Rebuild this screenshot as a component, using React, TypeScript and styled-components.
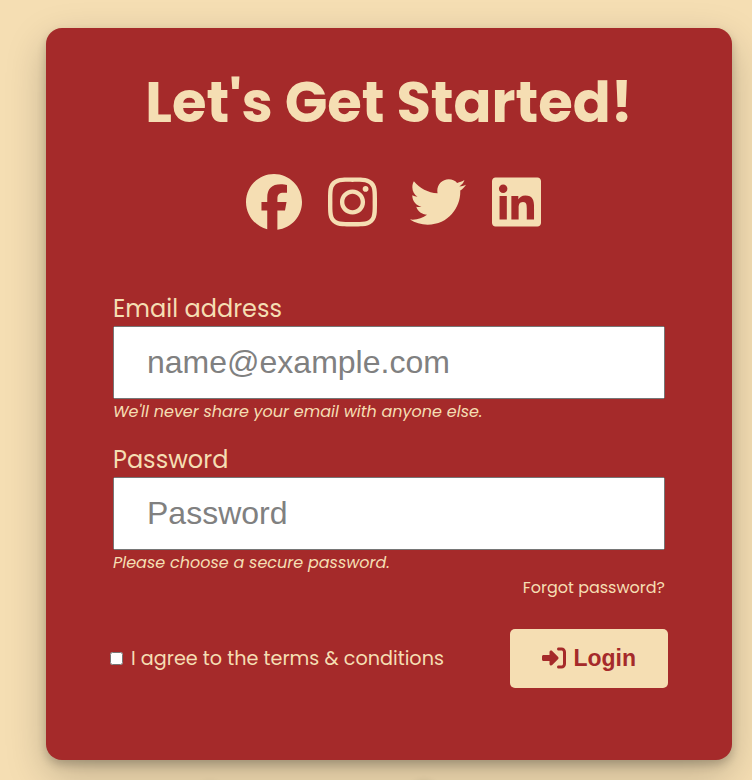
import React from 'react';
import styled, { createGlobalStyle } from 'styled-components';
import { FaFacebook, FaInstagram, FaTwitter, FaLinkedin, FaRightToBracket } from 'react-icons/fa6';

const Global = createGlobalStyle`
  * { box-sizing: border-box; }
  html { background: wheat; }
  body { margin: 0; height: 780px; overflow: hidden; color: wheat; font-family: Poppins, "Open Sans", sans-serif; }
`;
const Card = styled.main`
  width: 686px; height: 732px; margin: 28px 0 0 46px; padding: 36px 67px 0;
  background: brown; border-radius: 16px;
  box-shadow: 0 5px 10px rgba(0,0,0,.2), 0 15px 40px rgba(0,0,0,.22);
  display: flex; flex-direction: column;
`;
const Title = styled.h1`
  margin: 0; height: 76px; font-size: 56px; line-height: 78px; font-weight: 700;
  text-align: center; white-space: nowrap;
`;
const Socials = styled.nav`
  display: flex; gap: 26px; margin: 34px 0 0 133px; height: 56px;
  svg { height: 56px; width: 56px; flex: none; }
`;
const Form = styled.form`display: flex; flex-direction: column; width: 552px; margin-top: 60px;`;
const Field = styled.div<{ $height: number }>`height: ${p => p.$height}px;`;
const Label = styled.label`display: block; height: 36px; line-height: 38px; font-size: 24px; white-space: nowrap;`;
const Input = styled.input`
  display: block; width: 552px; height: 73px; padding: 0 32px; font: 32px "Liberation Sans", sans-serif;
  &::placeholder { color: gray; }
`;
const Hint = styled.em`display: block; height: 24px; font-size: 16px; line-height: 26px; white-space: nowrap;`;
const Forgot = styled.a`align-self: flex-end; font-size: 16px; line-height: 24px; color: wheat;`;
const Actions = styled.div`display: flex; justify-content: space-between; align-items: center; margin: 29px -3px 0;`;
const Terms = styled.label`display: flex; align-items: center; font-size: 19.2px; white-space: nowrap; input { margin: 0 8px 0 0; }`;
const Button = styled.button`
  width: 158px; height: 59px; padding: 0; border: 0; border-radius: 5px; background: wheat; color: brown;
  font: bold 23px "Liberation Sans", sans-serif; display: flex; align-items: center; justify-content: center; gap: 7.5px;
  svg { width: 24px; height: 24px; margin-bottom: 2px; }
`;
/* Soft shadows that rise from the section below the card. */
const Below = styled.footer`display: flex; gap: 190px; padding: 24px 0 0 198px;`;
const Spot = styled.span<{ $alpha: number }>`
  width: 24px; height: 24px; border-radius: 50%;
  box-shadow: 0 0 8px rgba(0,0,0,${p => p.$alpha});
`;

export default function App() {
  return <><Global /><Card>
    <Title>Let's Get Started!</Title>
    <Socials>
      <FaFacebook />
      <FaInstagram preserveAspectRatio="xMinYMid meet" />
      <FaTwitter />
      <FaLinkedin preserveAspectRatio="xMinYMid meet" />
    </Socials>
    <Form>
      <Field $height={151}><Label>Email address</Label><Input placeholder="name@example.com" /><Hint>We'll never share your email with anyone else.</Hint></Field>
      <Field $height={135}><Label>Password</Label><Input type="password" placeholder="Password" /><Hint>Please choose a secure password.</Hint></Field>
      <Forgot>Forgot password?</Forgot>
      <Actions><Terms><input type="checkbox" />I agree to the terms &amp; conditions</Terms><Button type="button"><FaRightToBracket />Login</Button></Actions>
    </Form>
  </Card>
  <Below><Spot $alpha={0.12} /><Spot $alpha={0.3} /></Below></>;
}
